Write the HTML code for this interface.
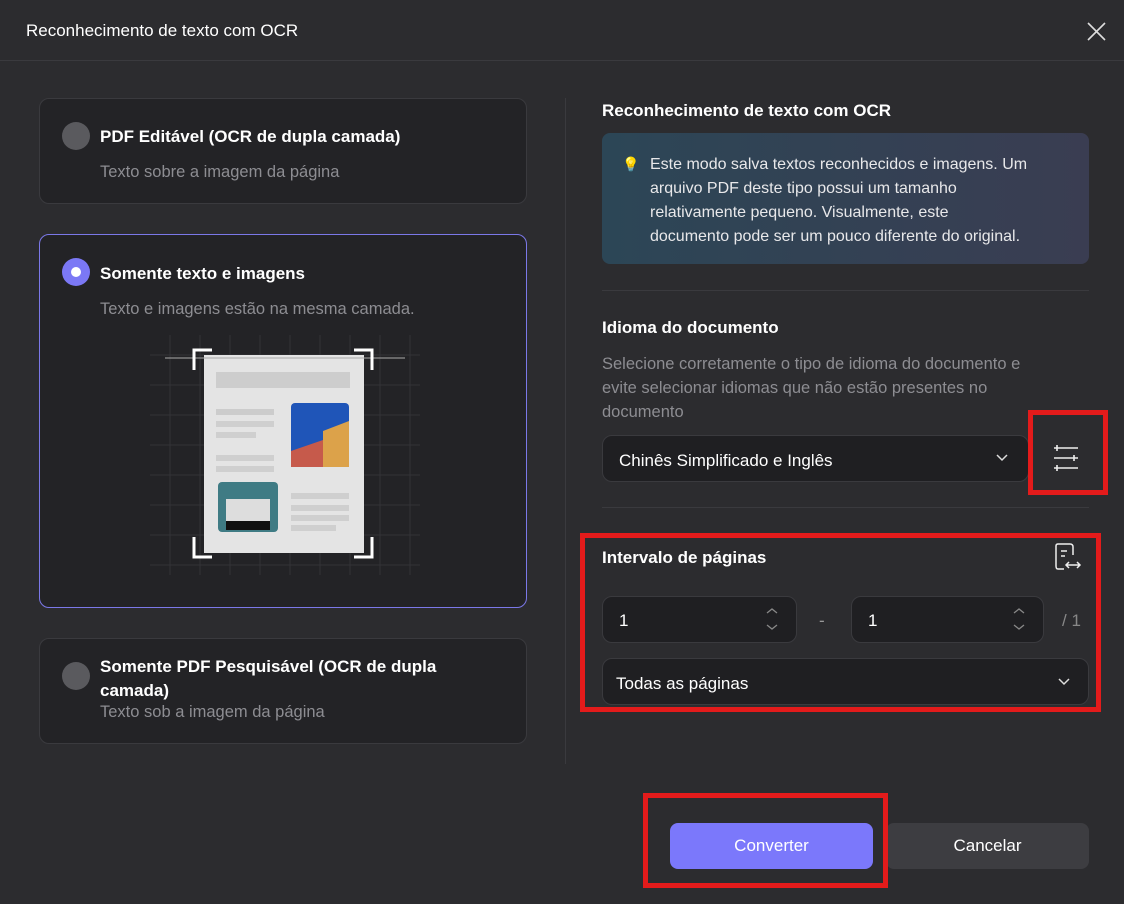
<!DOCTYPE html>
<html><head><meta charset="utf-8"><style>
*{box-sizing:border-box;margin:0;padding:0}
body{width:1124px;height:904px;background:#2c2c2f;font-family:"Liberation Sans",sans-serif;color:#fff;position:relative;overflow:hidden}
.a{position:absolute}
.card{position:absolute;left:39px;width:488px;background:#232326;border:1px solid #3a3a3e;border-radius:10px}
.radio{position:absolute;left:22px;width:28px;height:28px;border-radius:50%;background:#5a5a5e}
.t{position:absolute;left:60px;font-size:17px;font-weight:bold}
.s{position:absolute;left:60px;font-size:16.5px;color:#8d8d92}
.inp{position:absolute;background:#1f1f22;border:1px solid #3a3a3e;border-radius:10px;font-size:17px}
.red{position:absolute;border:5px solid #e31b1b}
</style></head><body>
<div class="a" style="left:26px;top:21px;font-size:17px">Reconhecimento de texto com OCR</div>
<svg class="a" style="left:1087px;top:22px" width="19" height="19"><path d="M1 1L18 18M18 1L1 18" stroke="#ddd" stroke-width="1.6"/></svg>
<div class="a" style="left:0;top:60px;width:1124px;height:1px;background:#3a3a3e"></div>

<div class="card" style="top:98px;height:106px"><div class="radio" style="top:23px"></div><div class="t" style="top:28px">PDF Editável (OCR de dupla camada)</div><div class="s" style="top:64px">Texto sobre a imagem da página</div></div>
<div class="card" style="top:234px;height:374px;border-color:#7b78e8"><div class="radio" style="top:23px;background:#7b78f5"><div style="position:absolute;left:9px;top:9px;width:10px;height:10px;border-radius:50%;background:#fff"></div></div><div class="t" style="top:29px">Somente texto e imagens</div><div class="s" style="top:65px">Texto e imagens estão na mesma camada.</div>
<svg class="a" style="left:110px;top:90px" width="270" height="260">
<g stroke="#333337" stroke-width="1">
<path d="M20 10V250M50 10V250M80 10V250M110 10V250M140 10V250M170 10V250M200 10V250M230 10V250M260 10V250M0 30H270M0 60H270M0 90H270M0 120H270M0 150H270M0 180H270M0 210H270M0 240H270"/></g>
<rect x="54" y="30" width="160" height="198" fill="#e4e4e4"/>
<line x1="15" y1="33" x2="255" y2="33" stroke="#aaa" stroke-width="2" opacity=".5"/>
<rect x="66" y="47" width="134" height="16" fill="#cdcdcd"/>
<rect x="66" y="84" width="58" height="6" fill="#cccccc"/><rect x="66" y="96" width="58" height="6" fill="#cfcfcf"/><rect x="66" y="107" width="40" height="6" fill="#cfcfcf"/>
<rect x="66" y="130" width="58" height="6" fill="#cfcfcf"/><rect x="66" y="141" width="58" height="6" fill="#cfcfcf"/>
<rect x="141" y="78" width="58" height="64" rx="4" fill="#1f55b8"/><path d="M173 106L199 96V142H173Z" fill="#dca24a"/><path d="M141 126L173 115V142H141Z" fill="#c65a4b"/>
<rect x="68" y="157" width="60" height="50" rx="4" fill="#3f7b84"/><rect x="76" y="174" width="44" height="22" fill="#ddd"/><rect x="76" y="196" width="44" height="9" fill="#111"/>
<rect x="141" y="168" width="58" height="6" fill="#cfcfcf"/><rect x="141" y="180" width="58" height="6" fill="#cfcfcf"/><rect x="141" y="190" width="58" height="6" fill="#cfcfcf"/><rect x="141" y="200" width="45" height="6" fill="#cfcfcf"/>
<g stroke="#fff" stroke-width="3" fill="none"><path d="M44 45V25H62M204 25H222V45M44 212V232H62M204 232H222V212"/></g>
</svg></div>
<div class="card" style="top:638px;height:106px"><div class="radio" style="top:23px"></div><div class="t" style="top:16px;line-height:24px;width:380px">Somente PDF Pesquisável (OCR de dupla camada)</div><div class="s" style="top:64px">Texto sob a imagem da página</div></div>

<div class="a" style="left:565px;top:98px;width:1px;height:666px;background:#3a3a3e"></div>

<div class="a" style="left:602px;top:101px;font-size:17px;font-weight:bold">Reconhecimento de texto com OCR</div>
<div class="a" style="left:602px;top:133px;width:487px;height:131px;border-radius:8px;background:linear-gradient(90deg,#2c4656,#3a3d52)"></div>
<div class="a" style="left:622px;top:156px;color:#f5d35a;font-size:14px">💡</div>
<div class="a" style="left:650px;top:153px;width:440px;font-size:16px;line-height:24px;color:#e8e8ea;white-space:nowrap">Este modo salva textos reconhecidos e imagens. Um<br>arquivo PDF deste tipo possui um tamanho<br>relativamente pequeno. Visualmente, este<br>documento pode ser um pouco diferente do original.</div>
<div class="a" style="left:602px;top:290px;width:487px;height:1px;background:#3a3a3e"></div>
<div class="a" style="left:602px;top:318px;font-size:17px;font-weight:bold">Idioma do documento</div>
<div class="a" style="left:602px;top:352px;width:480px;font-size:16.5px;line-height:24px;color:#8d8d92;white-space:nowrap">Selecione corretamente o tipo de idioma do documento e<br>evite selecionar idiomas que não estão presentes no<br>documento</div>
<div class="inp" style="left:602px;top:435px;width:427px;height:47px;padding:15px 16px">Chinês Simplificado e Inglês</div>
<svg class="a" style="left:996px;top:454px" width="12" height="8"><path d="M1 1L6 6L11 1" stroke="#ddd" stroke-width="1.5" fill="none"/></svg>
<svg class="a" style="left:1052px;top:444px" width="28" height="28"><g stroke="#eee" stroke-width="1.6"><path d="M2 4H26M2 14H26M2 24H26"/><path d="M5 1V7M22 11V17M5 21V27"/></g></svg>
<div class="red" style="left:1028px;top:410px;width:80px;height:85px"></div>
<div class="a" style="left:602px;top:507px;width:487px;height:1px;background:#3a3a3e"></div>

<div class="a" style="left:602px;top:548px;font-size:17px;font-weight:bold">Intervalo de páginas</div>
<svg class="a" style="left:1054px;top:542px" width="28" height="30"><g stroke="#eee" stroke-width="1.5" fill="none"><path d="M10 27H4Q2 27 2 24V4Q2 2 4 2H16Q19 2 19 5V13"/><path d="M7 9H13M7 14H11M12 23H26M15 20L12 23L15 26M23 20L26 23L23 26"/></g></svg>
<div class="inp" style="left:602px;top:596px;width:195px;height:47px;padding:14px 16px">1</div>
<div class="inp" style="left:851px;top:596px;width:193px;height:47px;padding:14px 16px">1</div>
<svg class="a" style="left:765px;top:607px" width="14" height="24"><path d="M2 6L7 2L12 6M2 18L7 22L12 18" stroke="#888" stroke-width="1.3" fill="none"/></svg>
<svg class="a" style="left:1012px;top:607px" width="14" height="24"><path d="M2 6L7 2L12 6M2 18L7 22L12 18" stroke="#888" stroke-width="1.3" fill="none"/></svg>
<div class="a" style="left:819px;top:611px;color:#999;font-size:17px">-</div>
<div class="a" style="left:1062px;top:611px;color:#888;font-size:17px">/ 1</div>
<div class="inp" style="left:602px;top:658px;width:487px;height:47px;padding:15px 13px">Todas as páginas</div>
<svg class="a" style="left:1058px;top:678px" width="12" height="8"><path d="M1 1L6 6L11 1" stroke="#ddd" stroke-width="1.5" fill="none"/></svg>
<div class="red" style="left:580px;top:533px;width:521px;height:179px"></div>

<div class="a" style="left:670px;top:823px;width:203px;height:46px;border-radius:8px;background:#7b78fb;font-size:17px;text-align:center;line-height:46px">Converter</div>
<div class="a" style="left:886px;top:823px;width:203px;height:46px;border-radius:8px;background:#3d3d41;font-size:17px;text-align:center;line-height:46px">Cancelar</div>
<div class="red" style="left:643px;top:793px;width:245px;height:95px"></div>
</body></html>
